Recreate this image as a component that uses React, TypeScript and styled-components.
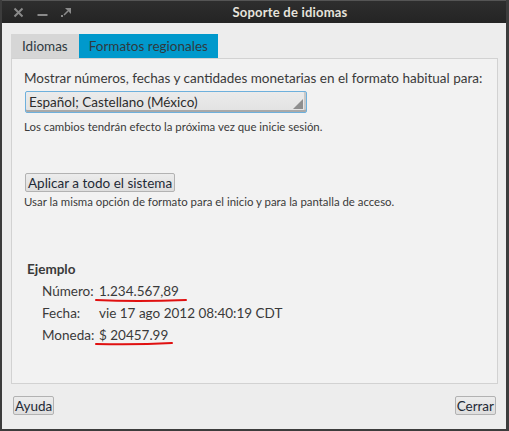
import React from "react";
import styled, { createGlobalStyle } from "styled-components";

const Global = createGlobalStyle`
  html, body { margin: 0; padding: 0; background: #3a3a3a; }
  body { font-family: "Lato", "DejaVu Sans", sans-serif; }
`;

const Window = styled.div`
  width: 509px;
  height: 431px;
  box-sizing: border-box;
  display: flex;
  flex-direction: column;
  background: #ededed;
  border-left: 2px solid #3c3c3c;
  border-right: 3px solid #3c3c3c;
  border-bottom: 2px solid #3c3c3c;
  overflow: hidden;
  font-family: "Lato", "DejaVu Sans", sans-serif;
  color: #3c3c3c;
`;

const TitleBar = styled.div`
  height: 23px;
  flex: 0 0 23px;
  background: linear-gradient(#2e2e2e, #242424);
  border-top: 1px solid #555;
  box-sizing: border-box;
  display: flex;
  align-items: center;
  padding-left: 11px;
`;

const Controls = styled.div`
  display: flex;
  gap: 13px;
  align-items: center;
`;

const Title = styled.div`
  flex: 1;
  text-align: center;
  padding-left: 2px;
  color: #e6e3dc;
  font-weight: bold;
  font-size: 13px;
  letter-spacing: 0.2px;
`;

const Body = styled.div`
  flex: 1;
  display: flex;
  flex-direction: column;
  padding: 11px 8px 0 9px;
`;

const Tabs = styled.div`
  display: flex;
  height: 24px;
`;

const Tab = styled.div<{ $active?: boolean }>`
  display: flex;
  align-items: center;
  padding: 0 ${(p) => (p.$active ? 10 : 11)}px 0 ${(p) => (p.$active ? 10 : 11)}px;
  font-size: 13.5px;
  background: ${(p) => (p.$active ? "#0099cc" : "#d6d6d6")};
  color: #2f3a40;
`;

const Panel = styled.div`
  height: 326px;
  box-sizing: border-box;
  border: 1px solid #d2d2d2;
  background: #f2f2f2;
  padding: 11px 12px 0 12px;
  display: flex;
  flex-direction: column;
  align-items: flex-start;
`;

const Text = styled.div`
  font-size: 13.5px;
  color: #3a3a3a;
  line-height: 16px;
`;

const Small = styled.div<{ $top?: number }>`
  font-size: 11.4px;
  color: #3a3a3a;
  line-height: 14px;
  margin-top: ${(p) => p.$top ?? 0}px;
`;

const Combo = styled.div`
  margin-top: 5px;
  margin-left: 1px;
  width: 282px;
  height: 22px;
  box-sizing: border-box;
  border: 1px solid #6eb0dc;
  border-radius: 2px;
  background: linear-gradient(#ebebeb, #e2e2e2);
  box-shadow: inset 0 -2px 0 #a9a9a9, inset -2px 0 0 #c8c8c8;
  display: flex;
  align-items: center;
  padding-left: 3px;
  font-size: 13.5px;
  color: #2c2c2c;
  position: relative;
`;

const Grip = styled.svg`
  position: absolute;
  right: 3px;
  bottom: 3px;
`;

const Button = styled.div<{ $top?: number; $pad?: number }>`
  margin-top: ${(p) => p.$top ?? 0}px;
  margin-left: 1px;
  height: 19px;
  box-sizing: border-box;
  padding: 0 ${(p) => p.$pad ?? 2}px;
  border: 1px solid #b2b2b2;
  border-radius: 2px;
  background: linear-gradient(#ececec, #dedede);
  display: flex;
  align-items: center;
  font-size: 13.5px;
  color: #1e2a36;
`;

const Example = styled.div`
  margin-top: 52px;
  margin-left: 3px;
  display: grid;
  grid-template-columns: 72px auto;
  grid-auto-rows: 22px;
`;

const ExampleTitle = styled.div`
  grid-column: 1 / 3;
  font-weight: bold;
  font-size: 13.5px;
  color: #3a3a3a;
  line-height: 16px;
`;

const Label = styled.div`
  font-size: 13.5px;
  color: #3a3a3a;
  padding-left: 15px;
  line-height: 16px;
`;

const Value = styled.div`
  font-size: 13.5px;
  color: #3a3a3a;
  line-height: 16px;
  position: relative;
`;

const Mark = styled.svg`
  position: absolute;
  left: -3px;
  top: 14px;
  overflow: visible;
`;

const Footer = styled.div`
  flex: 1;
  display: flex;
  justify-content: space-between;
  align-items: flex-start;
  padding: 12px 2px 0 1px;
`;

export default function App() {
  return (
    <>
      <Global />
      <Window>
        <TitleBar>
          <Controls>
            <svg width="11" height="11" viewBox="0 0 11 11">
              <path d="M1.5 1.5 L9.5 9.5 M9.5 1.5 L1.5 9.5" stroke="#8a8a8a" strokeWidth="2" />
            </svg>
            <svg width="11" height="11" viewBox="0 0 11 11">
              <rect x="0.5" y="7" width="10" height="2" fill="#8a8a8a" />
            </svg>
            <svg width="11" height="11" viewBox="0 0 11 11">
              <rect x="0" y="8" width="2" height="2" fill="#8a8a8a" />
              <path d="M4 1 H10 V7 Z" fill="#8a8a8a" />
              <path d="M3 8 L7 4" stroke="#8a8a8a" strokeWidth="1.6" />
            </svg>
          </Controls>
          <Title>Soporte de idiomas</Title>
        </TitleBar>
        <Body>
          <Tabs>
            <Tab>Idiomas</Tab>
            <Tab $active>Formatos regionales</Tab>
          </Tabs>
          <Panel>
            <Text>Mostrar números, fechas y cantidades monetarias en el formato habitual para:</Text>
            <Combo>
              Español; Castellano (México)
              <Grip width="10" height="10" viewBox="0 0 10 10">
                <path d="M10 0 L10 10 L0 10 Z" fill="#8e8e8e" />
              </Grip>
            </Combo>
            <Small $top={7}>Los cambios tendrán efecto la próxima vez que inicie sesión.</Small>
            <Button $top={39}>Aplicar a todo el sistema</Button>
            <Small $top={3}>Usar la misma opción de formato para el inicio y para la pantalla de acceso.</Small>
            <Example>
              <ExampleTitle>Ejemplo</ExampleTitle>
              <Label>Número:</Label>
              <Value>
                1.234.567,89
                <Mark width="92" height="6" viewBox="0 0 92 6">
                  <path d="M0 3 Q40 5 90 3" stroke="#e01010" strokeWidth="2" fill="none" strokeLinecap="round" />
                </Mark>
              </Value>
              <Label>Fecha:</Label>
              <Value>vie 17 ago 2012 08:40:19 CDT</Value>
              <Label>Moneda:</Label>
              <Value>
                $ 20457.99
                <Mark width="78" height="6" viewBox="0 0 78 6">
                  <path d="M0 3 Q40 4 76 2" stroke="#e01010" strokeWidth="2" fill="none" strokeLinecap="round" />
                </Mark>
              </Value>
            </Example>
          </Panel>
          <Footer>
            <Button $pad={1}>Ayuda</Button>
            <Button $pad={1}>Cerrar</Button>
          </Footer>
        </Body>
      </Window>
    </>
  );
}
